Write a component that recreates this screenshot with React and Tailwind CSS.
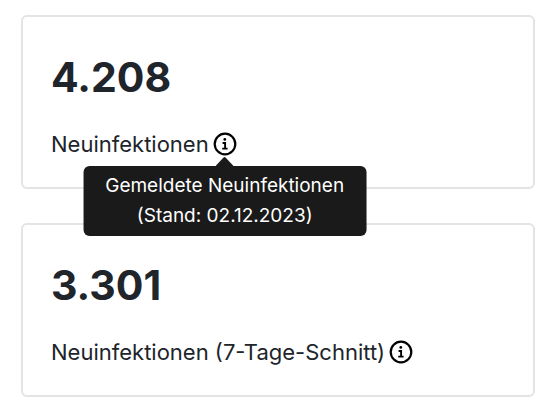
function InfoIcon() {
  return (
    <svg viewBox="0 0 24 24" className="size-6" fill="none" stroke="currentColor" aria-hidden="true">
      <circle cx="12" cy="12" r="10.3" strokeWidth="2.2" />
      <circle cx="11.8" cy="7.4" r="1.4" fill="currentColor" stroke="none" />
      <path d="M9.6 11h2.5v5.2M9.2 16.6h5.4" strokeWidth="1.9" />
    </svg>
  );
}

function StatCard({ value, label, tooltip }) {
  return (
    <section className="rounded-md border-2 border-[#e4e4e4] bg-white px-7 pt-9 pb-[26px]">
      <p className="text-[41px] leading-12 font-bold">{value}</p>
      <div className="mt-[26px] flex items-center gap-1 text-[22px] leading-[34px]">
        <span>{label}</span>
        <span className="relative flex">
          <button type="button" aria-label={`Info: ${label}`} className="flex text-black">
            <InfoIcon />
          </button>
          {tooltip && (
            <div
              role="tooltip"
              className="absolute top-full left-1/2 z-10 flex -translate-x-1/2 flex-col items-center"
            >
              <svg viewBox="0 0 18 10" className="h-2.5 w-[18px] text-[#1a1a1a]" aria-hidden="true">
                <path d="M0 10 8 1.6Q9 .6 10 1.6L18 10Z" fill="currentColor" />
              </svg>
              <div className="rounded-md bg-[#1a1a1a] px-[22px] py-[5px] text-center text-[19px] leading-[30px] whitespace-nowrap text-white">
                {tooltip.map((line) => (
                  <div key={line}>{line}</div>
                ))}
              </div>
            </div>
          )}
        </span>
      </div>
    </section>
  );
}

export default function App() {
  return (
    <main className="flex flex-col gap-[34px] bg-white px-[21px] py-[15px] font-['Inter',sans-serif] text-[#20242b]">
      <StatCard
        value="4.208"
        label="Neuinfektionen"
        tooltip={['Gemeldete Neuinfektionen', '(Stand: 02.12.2023)']}
      />
      <StatCard value="3.301" label="Neuinfektionen (7-Tage-Schnitt)" />
    </main>
  );
}
